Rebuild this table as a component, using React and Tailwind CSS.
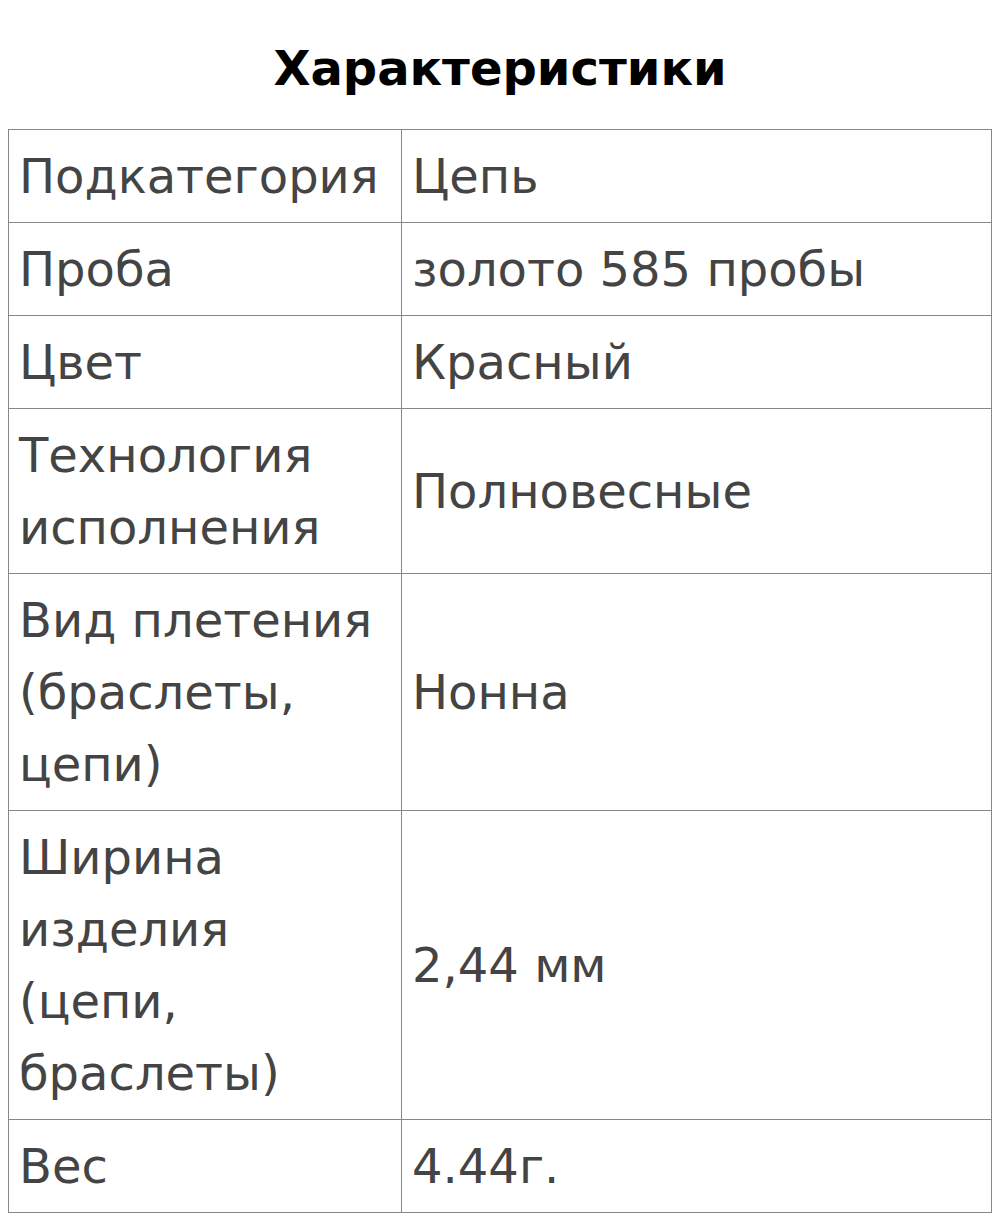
export default function App() {
  const rows = [
    ["Подкатегория", "Цепь"],
    ["Проба", "золото 585 пробы"],
    ["Цвет", "Красный"],
    ["Технология исполнения", "Полновесные"],
    ["Вид плетения (браслеты, цепи)", "Нонна"],
    ["Ширина изделия (цепи, браслеты)", "2,44 мм"],
    ["Вес", "4.44г."],
  ];
  return (
    <div className="bg-white w-[1000px] min-h-[1221px] px-[8px]" style={{ fontFamily: '"DejaVu Sans", sans-serif' }}>
      <h2 className="pt-[32px] mb-[25px] text-center text-[48px] leading-[72px] font-bold text-black">Характеристики</h2>
      <table className="w-[984px] table-fixed border-collapse text-[48px] leading-[72px] text-[#444]">
        <colgroup>
          <col className="w-[393px]" />
          <col />
        </colgroup>
        <tbody>
          {rows.map(([k, v]) => (
            <tr key={k}>
              <td className="border border-[#888] px-[10px] py-[10px] align-middle">{k}</td>
              <td className="border border-[#888] px-[10px] py-[10px] align-middle">{v}</td>
            </tr>
          ))}
        </tbody>
      </table>
    </div>
  );
}
